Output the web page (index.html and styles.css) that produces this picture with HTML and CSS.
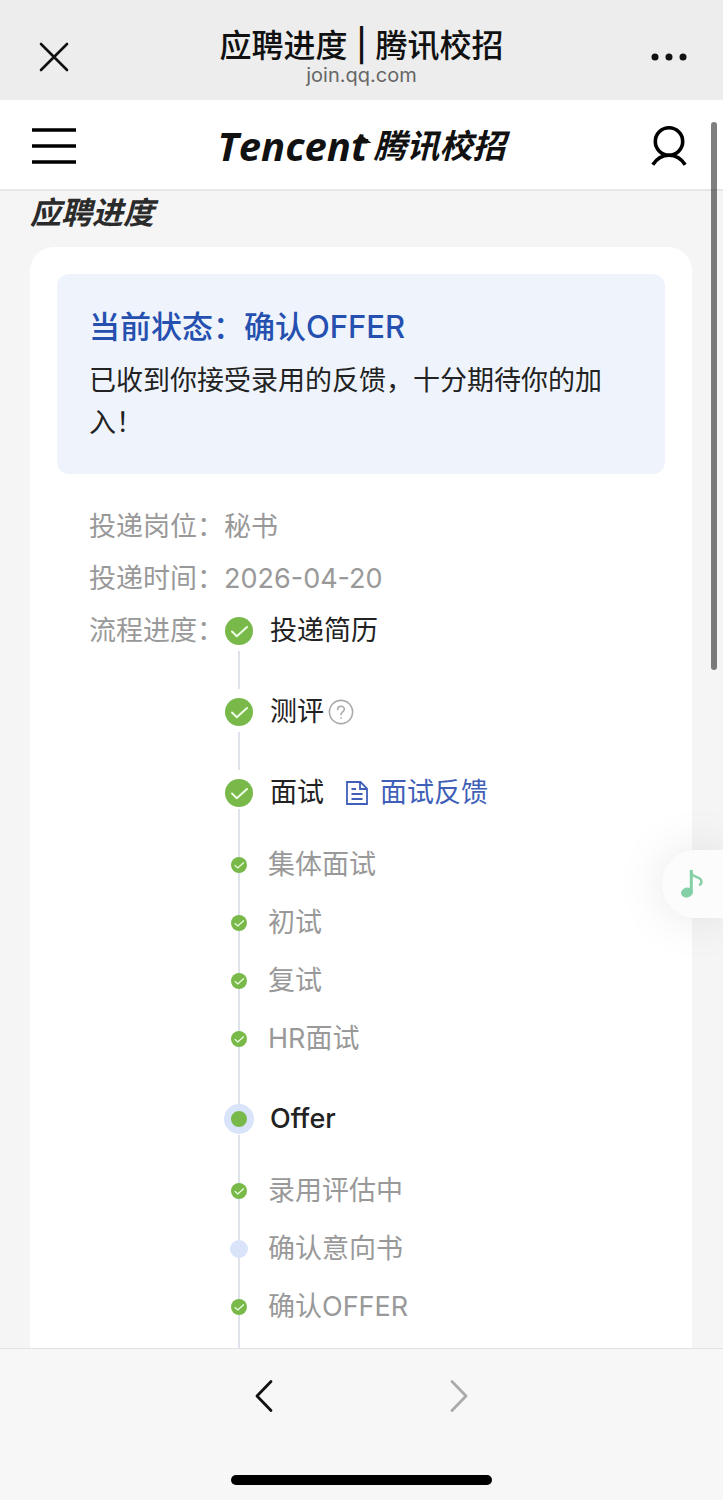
FILE: index.html
```
<!DOCTYPE html>
<html lang="zh-CN">
<head>
  <meta charset="UTF-8">
  <title>应聘进度 | 腾讯校招</title>
  <meta name="viewport" content="width=device-width, initial-scale=1.0">
  <link rel="stylesheet" href="styles.css">
</head>
<body>
  <!-- shared check mark -->
  <svg class="defs" width="0" height="0" aria-hidden="true">
    <symbol id="check" viewBox="0 0 28 28">
      <circle cx="14" cy="14" r="14" fill="#78b94a"/>
      <path d="M7 14.5l4.8 4.7L22 10" fill="none" stroke="#efffe6" stroke-width="2" stroke-linecap="round" stroke-linejoin="round"/>
    </symbol>
  </svg>

  <header class="browser-bar">
    <button class="icon-btn" aria-label="关闭">
      <svg width="30" height="30" viewBox="0 0 30 30" fill="none" stroke="#111" stroke-width="2.6" stroke-linecap="round"><path d="M2 2l26 26M28 2L2 28"/></svg>
    </button>
    <div class="page-info">
      <div class="page-title">应聘进度 | 腾讯校招</div>
      <div class="page-host">join.qq.com</div>
    </div>
    <button class="icon-btn" aria-label="更多">
      <svg width="36" height="8" viewBox="0 0 36 8" fill="#111"><circle cx="4" cy="4" r="3.5"/><circle cx="18" cy="4" r="3.5"/><circle cx="32" cy="4" r="3.5"/></svg>
    </button>
  </header>

  <nav class="site-bar">
    <button class="icon-btn" aria-label="菜单">
      <svg width="44" height="36" viewBox="0 0 44 36" fill="none" stroke="#000" stroke-width="3.6"><path d="M0 2h44M0 18h44M0 34h44"/></svg>
    </button>
    <a class="logo" href="#"><span class="logo-en">Tencent</span><span class="logo-cn">腾讯校招</span></a>
    <button class="icon-btn" aria-label="我的">
      <svg width="36" height="40" viewBox="0 0 36 40" fill="none" stroke="#000" stroke-width="3.6"><circle cx="18" cy="15.5" r="13.7"/><path d="M1.8 38.8C5.5 33 11 29.3 18 29.3S30.5 33 34.2 38.8"/></svg>
    </button>
  </nav>

  <main class="content">
    <h1>应聘进度</h1>
    <section class="card">
      <div class="status">
        <h2>当前状态：确认OFFER</h2>
        <p>已收到你接受录用的反馈，十分期待你的加入！</p>
      </div>

      <dl class="info">
        <dt>投递岗位：</dt>
        <dd>秘书</dd>
        <dt>投递时间：</dt>
        <dd>2026-04-20</dd>
        <dt>流程进度：</dt>
        <dd>
          <ol class="steps">
            <li class="step">
              <div class="row"><span class="mark"><svg class="big"><use href="#check"/></svg></span>投递简历</div>
            </li>
            <li class="step">
              <div class="row"><span class="mark"><svg class="big"><use href="#check"/></svg></span>测评
                <button class="help" aria-label="说明">
                  <svg width="26" height="26" viewBox="0 0 26 26" fill="none" stroke="#aaa" stroke-width="1.6" stroke-linecap="round"><circle cx="13" cy="13" r="11.6"/><path d="M9.7 10.6C9.7 6.2 16.4 6.2 16.4 10.3C16.4 12.8 13 12.7 13 15.8"/><path d="M13 18.8v.3"/></svg>
                </button>
              </div>
            </li>
            <li class="step group">
              <div class="row"><span class="mark"><svg class="big"><use href="#check"/></svg></span>面试
                <a class="feedback" href="#">
                  <svg width="22" height="24" viewBox="0 0 22 24" fill="none" stroke="#3f5fb8" stroke-width="1.8"><path d="M1 1h13.5L21 7.5V23H1zM14 1v7h7M5.500 8h4.500M5.500 13h11M5.500 18h11"/></svg>
                  面试反馈
                </a>
              </div>
              <ol class="substeps">
                <li><span class="mark"><svg class="small"><use href="#check"/></svg></span>集体面试</li>
                <li><span class="mark"><svg class="small"><use href="#check"/></svg></span>初试</li>
                <li><span class="mark"><svg class="small"><use href="#check"/></svg></span>复试</li>
                <li><span class="mark"><svg class="small"><use href="#check"/></svg></span>HR面试</li>
              </ol>
            </li>
            <li class="step group current">
              <div class="row"><span class="mark"><i class="now"></i></span>Offer</div>
              <ol class="substeps">
                <li><span class="mark"><svg class="small"><use href="#check"/></svg></span>录用评估中</li>
                <li><span class="mark"><i class="pending"></i></span>确认意向书</li>
                <li><span class="mark"><svg class="small"><use href="#check"/></svg></span>确认OFFER</li>
              </ol>
            </li>
          </ol>
        </dd>
      </dl>
    </section>
  </main>

  <footer class="bottom-bar">
    <div class="history">
      <button class="icon-btn" aria-label="后退">
        <svg width="20" height="34" viewBox="0 0 20 34" fill="none" stroke="#111" stroke-width="2.8" stroke-linecap="round" stroke-linejoin="round"><path d="M17 2.5L3 17l14 14.5"/></svg>
      </button>
      <button class="icon-btn" aria-label="前进" disabled>
        <svg width="20" height="34" viewBox="0 0 20 34" fill="none" stroke="#aaa" stroke-width="2.8" stroke-linecap="round" stroke-linejoin="round"><path d="M3 2.5L17 17 3 31.5"/></svg>
      </button>
    </div>
    <div class="home-indicator"></div>
  </footer>

  <button class="music" aria-label="音乐">
    <svg width="24" height="30" viewBox="0 0 24 30" fill="none" stroke="#83cfa6"><ellipse cx="7" cy="23.5" rx="6" ry="5" fill="#83cfa6" stroke="none" transform="rotate(-15 7 23.5)"/><path d="M11.3 1v22" stroke-width="3"/><path d="M11 4c3 5.500 10.500 3 10.500 9 0 1.500-.8 2.500-2.500 3" stroke-width="2.4"/></svg>
  </button>
  <div class="scroll-thumb"></div>
</body>
</html>
```
FILE: styles.css
```
* {
  box-sizing: border-box;
}

body {
  margin: 0;
  height: 100vh;
  display: flex;
  flex-direction: column;
  font-family: Inter, "Noto Sans CJK SC", sans-serif;
  font-size: 27px;
  color: #222;
  background: #f5f5f5;
}

h1, h2, p, dl, dd, ol {
  margin: 0;
  padding: 0;
}

ol {
  list-style: none;
}

a {
  text-decoration: none;
}

button {
  padding: 0;
  border: 0;
  background: none;
}

svg {
  display: block;
}

.defs {
  position: absolute;
}

.icon-btn {
  width: 44px;
  height: 44px;
  display: flex;
  align-items: center;
  justify-content: center;
}

/* top bars */
.browser-bar, .site-bar {
  flex: none;
  display: flex;
  align-items: center;
  justify-content: space-between;
  padding: 0 32px;
}

.browser-bar {
  height: 100px;
  padding-top: 14px;
  background: #ededed;
}

.page-info {
  text-align: center;
}

.page-title {
  font-size: 32px;
  line-height: 36px;
  font-weight: 500;
  color: #111;
}

.page-host {
  font-size: 20px;
  line-height: 22px;
  color: #666;
}

.site-bar {
  height: 91px;
  padding-top: 3px;
  background: #fff;
  border-bottom: 2px solid #e6e6e6;
}

.logo {
  display: flex;
  align-items: center;
  gap: 6px;
  font-style: italic;
  color: #111;
}

.logo-en {
  position: relative;
  font-family: "Open Sans", sans-serif;
  font-size: 40px;
  line-height: 48px;
  font-weight: 700;
}

/* arrow tip on the last letter */
.logo-en::after {
  content: "";
  position: absolute;
  top: 12px;
  right: -4px;
  width: 15px;
  height: 9px;
  background: #111;
  clip-path: polygon(25% 0, 100% 100%, 0 100%);
}

.logo-cn {
  font-size: 33px;
  line-height: 48px;
  font-weight: 700;
}

/* page */
.content {
  flex: 1;
  min-height: 0;
  overflow: hidden auto;
  scrollbar-width: none;
  padding: 0 31px 0 30px;
}

h1 {
  font-size: 31px;
  line-height: 44px;
  font-style: italic;
  font-weight: 700;
  color: #2b2b2b;
}

.card {
  margin-top: 12px;
  padding: 27px;
  border-radius: 24px;
  background: #fff;
}

.status {
  padding: 32px 32px 30px;
  border-radius: 12px;
  background: #eff4fc;
}

h2 {
  font-size: 31px;
  line-height: 42px;
  font-weight: 500;
  margin-bottom: 12px;
  color: #2550b0;
}

.status p {
  line-height: 42px;
}

.info {
  display: grid;
  grid-template-columns: 135px 1fr;
  padding: 27px 32px;
  line-height: 52px;
  color: #999;
}

/* progress */
.step {
  position: relative;
  padding-bottom: 29px;
  color: #222;
}

.step::before {
  content: "";
  position: absolute;
  left: 14px;
  top: 46px;
  bottom: -3px;
  width: 2px;
  background: #dfe2ea;
}

.step.group {
  padding-bottom: 25px;
}

.step.group::before {
  top: 42px;
  bottom: -12px;
}

.row, .substeps li {
  position: relative;
  display: flex;
  align-items: center;
}

.row {
  height: 52px;
}

.current .row {
  font-weight: 500;
}

.mark {
  flex: none;
  width: 30px;
  margin-right: 16px;
  display: flex;
  justify-content: center;
}

.substeps .mark {
  margin-right: 14px;
}

.big {
  width: 28px;
  height: 28px;
}

.small {
  width: 16px;
  height: 16px;
}

.now {
  width: 30px;
  height: 30px;
  border: 7px solid #d9e3fa;
  border-radius: 50%;
  background: #78b94a;
}

.pending {
  width: 18px;
  height: 18px;
  border-radius: 50%;
  background: #d9e3fa;
}

.help {
  margin-left: 4px;
}

.feedback {
  display: flex;
  align-items: center;
  gap: 12px;
  margin-left: 22px;
  color: #3f5fb8;
}

.substeps {
  padding-top: 17px;
}

.substeps li {
  height: 58px;
  color: #999;
}

/* bottom toolbar */
.bottom-bar {
  flex: none;
  height: 152px;
  padding: 25px 0 15px;
  display: flex;
  flex-direction: column;
  align-items: center;
  justify-content: space-between;
  border-top: 1px solid #e2e2e2;
  background: #f7f7f7;
}

.history {
  display: flex;
  gap: 151px;
}

.home-indicator {
  width: 36%;
  height: 10px;
  border-radius: 5px;
  background: #000;
}

/* floating items */
.music {
  position: fixed;
  right: 0;
  top: 850px;
  width: 61px;
  height: 68px;
  padding-left: 18px;
  border-radius: 34px 0 0 34px;
  background: #fcfcfc;
  box-shadow: 0 0 50px rgba(0, 0, 0, 0.1);
}

.scroll-thumb {
  position: fixed;
  right: 6px;
  top: 122px;
  width: 6px;
  height: 548px;
  border-radius: 3px;
  background: rgba(0, 0, 0, 0.5);
}
```
